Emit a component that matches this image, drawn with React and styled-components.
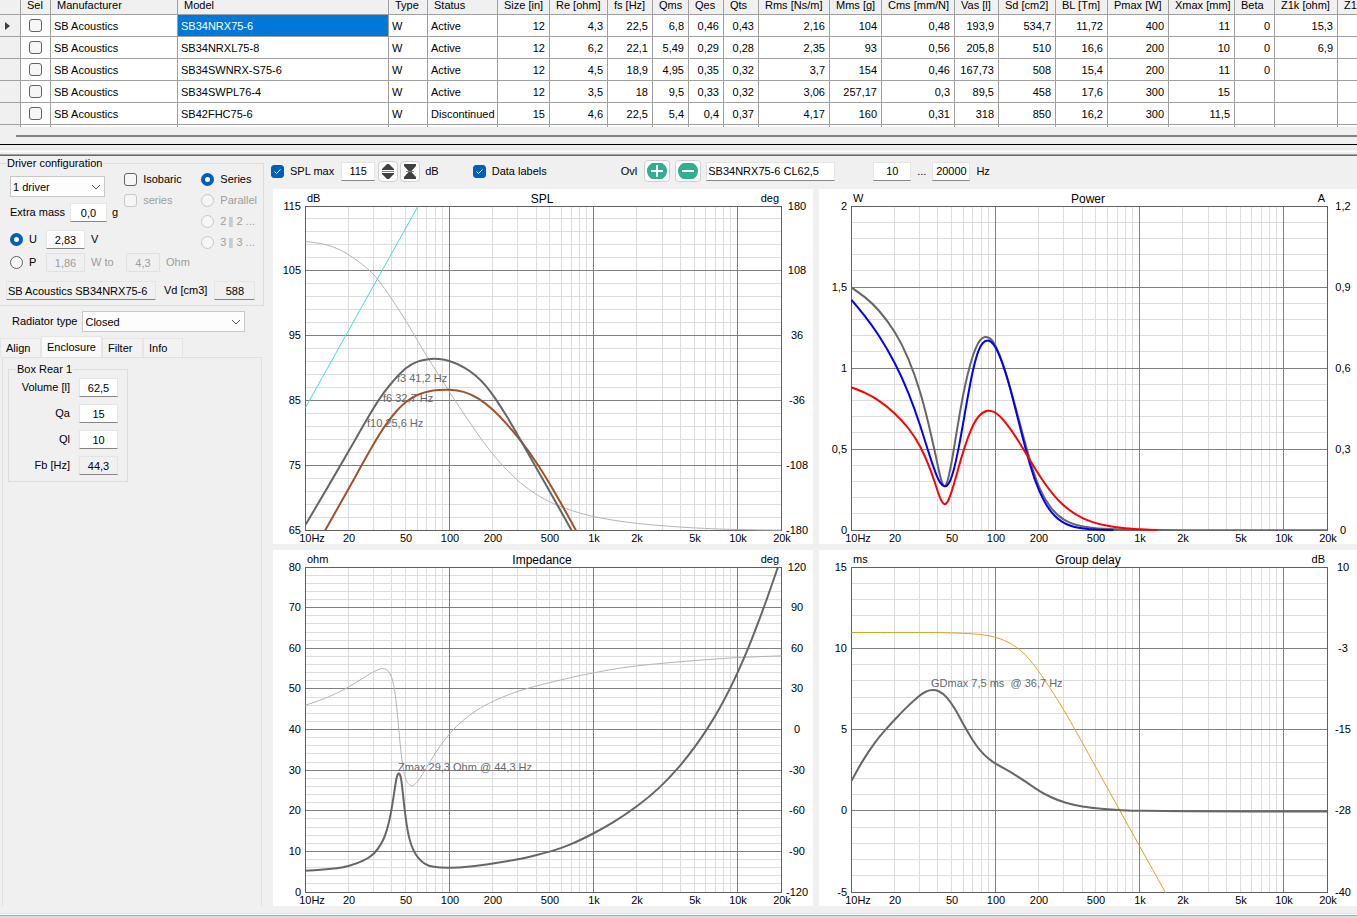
import React, { useEffect, useLayoutEffect, useRef, useState } from "react";
import styled, { createGlobalStyle, ThemeProvider } from "styled-components";

const theme = {
  colors: {
    face: "#f0f0f0",
    white: "#ffffff",
    text: "#000000",
    disabled: "#9d9d9d",
    line: "#a0a0a0",
    border: "#dcdcdc",
    fieldBottom: "#868686",
    accent: "#005fb8",
    selection: "#0078d7",
    gridMinor: "#dcdcdc",
    gridMajor: "#808080",
    frame: "#606060",
  },
};

const GlobalStyle = createGlobalStyle`
  * {
    box-sizing: border-box;
  }
  body {
    margin: 0;
    overflow: hidden;
    background-color: #f0f0f0;
    color: #000000;
    font-family: "Liberation Sans", Arial, sans-serif;
    font-size: 11px;
    line-height: 15px;
  }
  input, select, button {
    font-family: inherit;
    font-size: inherit;
    color: inherit;
    margin: 0;
  }
`;

const Window = styled.div`
  min-height: 100vh;
  display: flex;
  flex-direction: column;
`;

/* ---------- driver table ---------- */

const TableArea = styled.div`
  overflow: hidden;
  background-color: ${(props) => props.theme.colors.white};
`;

const DriverTable = styled.table`
  width: 1398px;
  table-layout: fixed;
  border-spacing: 0;
`;

const HeadCell = styled.th`
  height: 15px;
  padding: 0 0 3px 6px;
  font-weight: 400;
  line-height: 11px;
  text-align: left;
  white-space: nowrap;
  background-color: ${(props) => props.theme.colors.face};
  border-right: 1px solid ${(props) => props.theme.colors.line};
  border-bottom: 1px solid ${(props) => props.theme.colors.line};
`;

const Cell = styled.td`
  height: ${(props) => (props.$cut ? "2px" : "22px")};
  padding: 0 4px 0 3px;
  line-height: ${(props) => (props.$cut ? "2px" : "20px")};
  white-space: nowrap;
  text-align: ${(props) => props.$align || "right"};
  color: ${(props) => (props.$selected ? props.theme.colors.white : "inherit")};
  background-color: ${(props) =>
    props.$selected ? props.theme.colors.selection : props.theme.colors.white};
  border-right: 1px solid ${(props) => props.theme.colors.line};
  border-bottom: ${(props) => (props.$cut ? 0 : 1)}px solid
    ${(props) => props.theme.colors.line};
`;

const RowHeader = styled(Cell)`
  background-color: ${(props) => props.theme.colors.face};
  svg {
    display: block;
  }
`;

const ScrollTrack = styled.div`
  height: 17px;
  padding: 8px 0 0 16px;
`;

const ScrollThumb = styled.div`
  height: 2px;
  background-color: #858585;
`;

const Splitter = styled.div`
  height: 12px;
  border-top: 1px solid #000000;
  border-bottom: 1px solid #696969;
  display: flex;
  flex-direction: column;
  justify-content: space-between;
  &::before {
    content: "";
    height: 2px;
    margin-top: 3px;
    border-top: 1px solid #e3e3e3;
    border-bottom: 1px solid #ffffff;
  }
  &::after {
    content: "";
    height: 1px;
    background-color: #a0a0a0;
  }
`;

/* ---------- form parts ---------- */

const Label = styled.label`
  display: flex;
  align-items: center;
  gap: ${(props) => props.$gap || 6}px;
  white-space: nowrap;
  color: ${(props) =>
    props.$disabled ? props.theme.colors.disabled : "inherit"};
`;

const CheckInput = styled.input.attrs({ type: "checkbox" })`
  appearance: none;
  flex: none;
  display: block;
  width: 13px;
  height: 13px;
  border: 1px solid #626262;
  border-radius: 3px;
  background-color: #f6f6f6;
  &:disabled {
    border-color: #c8c8c8;
  }
  &:checked {
    border-color: ${(props) => props.theme.colors.accent};
    background: ${(props) => props.theme.colors.accent};
  }
`;

const CheckBox = styled.span`
  display: grid;
  place-items: center;
  width: 13px;
  height: 13px;
  > * {
    grid-area: 1 / 1;
  }
  svg {
    pointer-events: none;
  }
`;

const RadioInput = styled.input.attrs({ type: "radio" })`
  appearance: none;
  flex: none;
  width: 13px;
  height: 13px;
  border: 1px solid #626262;
  border-radius: 50%;
  background-color: #f6f6f6;
  &:disabled {
    border-color: #c8c8c8;
  }
  &:checked {
    border: 4px solid ${(props) => props.theme.colors.accent};
    background-color: #ffffff;
  }
`;

const Field = styled.input`
  width: ${(props) => props.$width}px;
  height: 19px;
  padding: 0 1px;
  text-align: ${(props) => props.$align || "center"};
  border: 1px solid #e4e4e4;
  border-bottom-color: ${(props) => props.theme.colors.fieldBottom};
  border-radius: 1px;
  background-color: ${(props) => props.theme.colors.white};
  &:read-only {
    background-color: #f0f0f0;
  }
  &:disabled {
    color: ${(props) => props.theme.colors.disabled};
    background-color: #f0f0f0;
    border-color: #e0e0e0;
  }
`;

const SelectBox = styled.span`
  display: grid;
  align-items: center;
  width: ${(props) => props.$width}px;
  > * {
    grid-area: 1 / 1;
  }
  select {
    appearance: none;
    width: 100%;
    height: 21px;
    padding: 0 20px 0 2px;
    border: 1px solid #c8c8c8;
    border-radius: 0;
    background-color: #fdfdfd;
  }
  svg {
    justify-self: end;
    margin-right: 4px;
    pointer-events: none;
  }
`;

const Fieldset = styled.fieldset`
  min-width: 0;
  margin: 0;
  padding: ${(props) => props.$padding || "1px 6px 5px 6px"};
  border: 1px solid ${(props) => props.theme.colors.border};
  border-left-width: ${(props) => (props.$open ? 0 : 1)}px;
`;

const Legend = styled.legend`
  padding: 0 1px;
  line-height: 15px;
`;

/* ---------- left side ---------- */

const Workspace = styled.div`
  flex: 1;
  display: flex;
`;

const Sidebar = styled.aside`
  flex: none;
  width: 264px;
  display: flex;
  flex-direction: column;
`;

const ConfigTop = styled.div`
  display: flex;
  justify-content: space-between;
`;

const Stack = styled.div`
  display: flex;
  flex-direction: column;
  gap: ${(props) => props.$gap || 0}px;
  padding: ${(props) => props.$padding || 0};
`;

const Row = styled.div`
  display: flex;
  align-items: ${(props) => props.$align || "center"};
  gap: ${(props) => props.$gap || 6}px;
  padding: ${(props) => props.$padding || 0};
  white-space: nowrap;
  color: ${(props) =>
    props.$disabled ? props.theme.colors.disabled : "inherit"};
`;

const SourceLabel = styled(Label)`
  width: 30px;
  color: ${(props) => props.theme.colors.text};
`;

const PowerUnit = styled.span`
  width: 29px;
`;

const ParallelMark = styled.span`
  display: inline-block;
  width: 4px;
  height: 10px;
  margin: 0 3px;
  vertical-align: middle;
  background-color: #b8cfea;
  border-right: 1px solid #dcd3c4;
`;

const TabList = styled.div`
  display: flex;
  align-items: flex-end;
  margin-top: 4px;
`;

const Tab = styled.button`
  height: ${(props) => (props.$active ? 21 : 19)}px;
  width: ${(props) => props.$width}px;
  padding: 0 0 0 5px;
  text-align: left;
  border: 1px solid #e5e5e5;
  border-bottom: 0;
  background-color: ${(props) => (props.$active ? "#f9f9f9" : "#f2f2f2")};
`;

const TabPanel = styled.div`
  flex: 1;
  margin: 0 2px 7px 2px;
  padding: 4px 5px;
  border: 1px solid #e0e0e0;
  border-bottom: 0;
  background-color: ${(props) => props.theme.colors.face};
`;

const BoxGroup = styled.div`
  width: 120px;
`;

const BoxRow = styled(Label)`
  justify-content: flex-end;
`;

/* ---------- toolbar and charts ---------- */

const Content = styled.main`
  flex: 1;
  min-width: 0;
  padding: 0 0 7px 7px;
  display: flex;
  flex-direction: column;
`;

const Toolbar = styled.div`
  height: 33px;
  padding-bottom: 3px;
  display: flex;
  align-items: center;
`;

const ToolGroup = styled.div`
  display: flex;
  align-items: center;
  gap: ${(props) => props.$gap || 6}px;
  margin-right: ${(props) => props.$after || 0}px;
`;

const IconButton = styled.button`
  width: ${(props) => props.$width || 20}px;
  height: ${(props) => (props.$width ? 22 : 21)}px;
  padding: 0;
  display: grid;
  place-items: center;
  border: 1px solid #d0d0d0;
  border-radius: 4px;
  background-color: #fdfdfd;
`;

const ChartGrid = styled.div`
  flex: 1;
  display: grid;
  grid-template-columns: 1fr 1fr;
  grid-template-rows: 355fr 356fr;
  gap: 6px;
  margin: 0 -2px 0 2px;
`;

const ChartCard = styled.section`
  min-width: 0;
  min-height: 240px;
  overflow: hidden;
  background-color: ${(props) => props.theme.colors.white};
  display: grid;
`;

const ChartSvg = styled.svg`
  display: block;
  width: 100%;
  height: 100%;
  min-height: 0;
  contain: size;
  text {
    font-size: 11px;
    fill: ${(props) => props.theme.colors.text};
  }
  text.title {
    font-size: 12px;
  }
  text.note {
    fill: #696969;
  }
`;

const StatusEdge = styled.footer`
  height: 5px;
  border-top: 1px solid #e3e3e3;
  background: linear-gradient(
    #ffffff 0 1px,
    #a0b0b8 1px 2px,
    #cfe0e6 2px
  );
`;

/* ---------- data ---------- */

const columns = [
  ["Sel", 30],
  ["Manufacturer", 127],
  ["Model", 211],
  ["Type", 39],
  ["Status", 70],
  ["Size [in]", 52],
  ["Re [ohm]", 58],
  ["fs [Hz]", 45],
  ["Qms", 36],
  ["Qes", 35],
  ["Qts", 35],
  ["Rms [Ns/m]", 71],
  ["Mms [g]", 52],
  ["Cms [mm/N]", 73],
  ["Vas [l]", 44],
  ["Sd [cm2]", 57],
  ["BL [Tm]", 52],
  ["Pmax [W]", 61],
  ["Xmax [mm]", 66],
  ["Beta", 40],
  ["Z1k [ohm]", 63],
  ["Z1", 60],
];

const drivers = [
  ["SB34NRX75-6", "Active", "12", "4,3", "22,5", "6,8", "0,46", "0,43", "2,16", "104", "0,48", "193,9", "534,7", "11,72", "400", "11", "0", "15,3", ""],
  ["SB34NRXL75-8", "Active", "12", "6,2", "22,1", "5,49", "0,29", "0,28", "2,35", "93", "0,56", "205,8", "510", "16,6", "200", "10", "0", "6,9", ""],
  ["SB34SWNRX-S75-6", "Active", "12", "4,5", "18,9", "4,95", "0,35", "0,32", "3,7", "154", "0,46", "167,73", "508", "15,4", "200", "11", "0", "", ""],
  ["SB34SWPL76-4", "Active", "12", "3,5", "18", "9,5", "0,33", "0,32", "3,06", "257,17", "0,3", "89,5", "458", "17,6", "300", "15", "", "", ""],
  ["SB42FHC75-6", "Discontinued", "15", "4,6", "22,5", "5,4", "0,4", "0,37", "4,17", "160", "0,31", "318", "850", "16,2", "300", "11,5", "", "", ""],
];

const frequencyLabels = [
  [10, "10Hz"],
  [20, "20"],
  [50, "50"],
  [100, "100"],
  [200, "200"],
  [500, "500"],
  [1000, "1k"],
  [2000, "2k"],
  [5000, "5k"],
  [10000, "10k"],
  [20000, "20k"],
];

// Curve points live in a 1428 x span space and are scaled to the plot area.
const charts = [
  {
    title: "SPL",
    leftUnit: "dB",
    rightUnit: "deg",
    span: 972,
    left: ["115", "105", "95", "85", "75", "65"],
    right: ["180", "108", "36", "-36", "-108", "-180"],
    curves: [
      { color: "#b4b4b4", width: 1, points: [[0, 105], [44, 111], [84, 122], [130, 145], [184, 185], [216, 218], [259, 278], [301, 343], [334, 399], [369, 457], [404, 512], [433, 558], [474, 620], [519, 686], [562, 743], [604, 790], [644, 828], [694, 865], [744, 891], [794, 910], [864, 930], [994, 951], [1164, 964], [1294, 969], [1427, 971]] },
      { color: "#40e0d0", width: 1, points: [[0, 603], [337, 0]] },
      { color: "#a0522d", width: 2, points: [[57, 975], [130, 846], [204, 713], [244, 651], [274, 613], [301, 587], [334, 566], [369, 555], [400, 551], [433, 550], [474, 556], [519, 576], [562, 610], [604, 653], [646, 704], [694, 770], [744, 851], [794, 940], [813, 975]] },
      { color: "#666666", width: 2, points: [[0, 955], [65, 845], [130, 733], [194, 622], [234, 560], [270, 516], [301, 485], [334, 466], [369, 458], [400, 458], [433, 464], [474, 482], [510, 507], [541, 538], [570, 577], [604, 630], [646, 702], [694, 787], [764, 910], [800, 975]] },
    ],
    notes: [
      [92, 176, "f3 41,2 Hz"],
      [78, 196, "f6 32,7 Hz"],
      [62, 221, "f10 25,6 Hz"],
    ],
  },
  {
    title: "Power",
    leftUnit: "W",
    rightUnit: "A",
    span: 972,
    left: ["2", "1,5", "1", "0,5", "0"],
    right: ["1,2", "0,9", "0,6", "0,3", "0"],
    curves: [
      { color: "#666666", width: 2, points: [[0, 243], [41, 273], [81, 311], [130, 377], [171, 458], [205, 554], [230, 648], [250, 735], [262, 792], [271, 826], [278, 838], [285, 832], [293, 803], [306, 735], [326, 613], [342, 532], [356, 475], [371, 429], [386, 401], [401, 392], [417, 397], [432, 418], [446, 451], [461, 495], [481, 561], [511, 673], [541, 780], [566, 848], [596, 900], [636, 939], [691, 959], [761, 967], [840, 970], [1000, 971], [1200, 971], [1428, 971]] },
      { color: "#0000ff", width: 2, points: [[0, 280], [41, 330], [81, 386], [130, 470], [171, 560], [205, 654], [231, 737], [252, 798], [266, 828], [279, 839], [291, 832], [305, 796], [322, 722], [341, 615], [360, 512], [377, 444], [393, 411], [409, 402], [426, 413], [444, 448], [461, 495], [480, 561], [509, 675], [537, 779], [561, 847], [591, 905], [631, 946], [681, 964], [731, 969], [786, 971]] },
      { color: "#ff0000", width: 2, points: [[0, 543], [41, 559], [81, 582], [130, 621], [171, 666], [205, 718], [232, 778], [250, 828], [266, 875], [279, 893], [291, 880], [305, 840], [321, 784], [339, 724], [361, 664], [384, 627], [409, 613], [434, 620], [465, 652], [501, 704], [541, 770], [581, 832], [631, 892], [693, 935], [761, 956], [821, 965], [881, 969], [918, 971]] },
    ],
    notes: [],
  },
  {
    title: "Impedance",
    leftUnit: "ohm",
    rightUnit: "deg",
    span: 975,
    left: ["80", "70", "60", "50", "40", "30", "20", "10", "0"],
    right: ["120", "90", "60", "30", "0", "-30", "-60", "-90", "-120"],
    curves: [
      { color: "#b4b4b4", width: 1, points: [[0, 413], [44, 398], [94, 377], [130, 358], [174, 331], [204, 313], [220, 306], [231, 303], [242, 306], [251, 315], [259, 332], [266, 360], [272, 405], [278, 465], [284, 530], [291, 590], [299, 629], [308, 648], [318, 654], [328, 650], [341, 635], [361, 604], [394, 550], [433, 498], [474, 458], [514, 428], [562, 402], [624, 376], [694, 355], [764, 338], [815, 326], [865, 316], [930, 304], [995, 295], [1075, 287], [1170, 279], [1298, 270], [1428, 265]] },
      { color: "#666666", width: 2, points: [[0, 910], [44, 907], [94, 902], [130, 895], [174, 879], [204, 859], [228, 827], [244, 788], [256, 737], [266, 675], [272, 637], [276, 623], [280, 618], [284, 623], [288, 642], [293, 685], [301, 754], [311, 811], [323, 846], [339, 872], [359, 889], [384, 898], [432, 901], [494, 897], [562, 888], [634, 876], [694, 862], [744, 849], [794, 831], [829, 815], [865, 797], [925, 763], [993, 717], [1060, 662], [1118, 601], [1165, 542], [1205, 484], [1240, 426], [1272, 366], [1299, 309], [1327, 245], [1355, 173], [1385, 92], [1418, -3]] },
    ],
    notes: [[93, 204, "Zmax 29,3 Ohm @ 44,3 Hz"]],
  },
  {
    title: "Group delay",
    leftUnit: "ms",
    rightUnit: "dB",
    span: 975,
    left: ["15", "10", "5", "0", "-5"],
    right: ["10", "-3", "-15", "-28", "-40"],
    curves: [
      { color: "#daa520", width: 1, points: [[0, 195], [141, 195], [230, 195], [300, 196], [360, 199], [400, 203], [431, 209], [463, 221], [496, 240], [528, 269], [561, 311], [597, 364], [636, 426], [680, 503], [732, 597], [805, 729], [865, 837], [944, 979]] },
      { color: "#666666", width: 2, points: [[0, 640], [33, 581], [69, 527], [101, 488], [132, 454], [166, 419], [200, 388], [224, 372], [244, 368], [263, 372], [284, 388], [309, 422], [336, 471], [361, 514], [386, 549], [411, 573], [438, 592], [481, 616], [526, 645], [563, 670], [601, 690], [643, 706], [693, 717], [751, 724], [811, 728], [881, 730], [1000, 731], [1200, 732], [1428, 732]] },
    ],
    notes: [[80, 120, "GDmax 7,5 ms\u00a0 @ 36,7 Hz"]],
  },
];

/* ---------- chart ---------- */

// Cubic B-spline whose control points are pushed out so it meets the samples.
function smoothPath(points) {
  if (points.length < 3) {
    return `M${points.map((p) => p.join(" ")).join("L")}`;
  }
  const last = points.length - 1;
  const control = points.map((p, i) => {
    if (i === 0 || i === last) return p;
    return [0, 1].map(
      (k) => p[k] + (2 * p[k] - points[i - 1][k] - points[i + 1][k]) / 6
    );
  });
  const mirror = (p, q) => [2 * p[0] - q[0], 2 * p[1] - q[1]];
  const c = [
    mirror(control[0], control[1]),
    ...control,
    mirror(control[last], control[last - 1]),
  ];
  const mix = (a, b, t) => [a[0] + (b[0] - a[0]) * t, a[1] + (b[1] - a[1]) * t];
  let d = `M${points[0].join(" ")}`;
  for (let i = 1; i < c.length - 2; i++) {
    const b1 = mix(c[i], c[i + 1], 1 / 3);
    const b2 = mix(c[i], c[i + 1], 2 / 3);
    const end = mix(b2, mix(c[i + 1], c[i + 2], 1 / 3), 1 / 2);
    d += `C${[...b1, ...b2, ...end].map((n) => n.toFixed(2)).join(" ")}`;
  }
  return d;
}

const DECADES = Math.log10(2000);

function Chart({ id, data }) {
  const cardRef = useRef(null);
  const [size, setSize] = useState({ width: 540, height: 355 });

  const measure = () => {
    const box = cardRef.current.getBoundingClientRect();
    setSize({ width: Math.round(box.width), height: Math.round(box.height) });
  };

  useLayoutEffect(measure, []);

  useEffect(() => {
    const observer = new ResizeObserver(measure);
    observer.observe(cardRef.current);
    return () => observer.disconnect();
  }, []);

  const x0 = 32;
  const y0 = 17;
  const w = size.width - 64;
  const h = size.height - 31;
  const fx = (hz) => x0 + Math.floor((Math.log10(hz / 10) / DECADES) * w);
  const rows = data.left.length - 1;
  const fy = (i) => y0 + Math.floor((i / rows) * h);

  const lines = [];
  [10, 100, 1000, 10000].forEach((decade) => {
    for (let k = 1; k < 10; k++) {
      if (decade * k <= 20000) {
        lines.push({
          d: `M${fx(decade * k) + 0.5} ${y0}v${h}`,
          major: k === 1,
        });
      }
    }
  });
  for (let i = 0; i <= rows * 5; i++) {
    lines.push({ d: `M${x0} ${fy(i / 5) + 0.5}h${w}`, major: i % 5 === 0 });
  }
  lines.sort((a, b) => a.major - b.major);

  return (
    <ChartCard ref={cardRef}>
      <ChartSvg role="img" aria-label={data.title}>
        <clipPath id={id}>
          <rect x={x0} y={y0} width={w + 1} height={h + 1} />
        </clipPath>
        <g shapeRendering="crispEdges">
          {lines.map((line) => (
            <path
              key={line.d}
              d={line.d}
              stroke={
                line.major ? theme.colors.gridMajor : theme.colors.gridMinor
              }
            />
          ))}
          <rect
            x={x0 + 0.5}
            y={y0 + 0.5}
            width={w}
            height={h}
            fill="none"
            stroke={theme.colors.frame}
          />
        </g>
        <g clipPath={`url(#${id})`} fill="none">
          {data.curves.map((curve, i) => (
            <path
              key={i}
              d={smoothPath(
                curve.points.map(([x, y]) => [
                  x0 + 0.5 + (x * w) / 1428,
                  y0 + 0.5 + (y * h) / data.span,
                ])
              )}
              stroke={curve.color}
              strokeWidth={curve.width}
            />
          ))}
        </g>
        {data.notes.map(([x, y, text]) => (
          <text
            className="note"
            key={text}
            x={x0 + Math.round((x * w) / 476)}
            y={y0 + Math.round((y * h * 3) / data.span)}
          >
            {text}
          </text>
        ))}
        <text
          className="title"
          x={x0 + w / 2 - 1}
          y={y0 - 3}
          textAnchor="middle"
        >
          {data.title}
        </text>
        <text x={x0 + 2} y={y0 - 4}>
          {data.leftUnit}
        </text>
        <text x={x0 + w - 2} y={y0 - 4} textAnchor="end">
          {data.rightUnit}
        </text>
        {data.left.map((text, i) => (
          <text key={text} x={x0 - 4} y={fy(i) + 4} textAnchor="end">
            {text}
          </text>
        ))}
        {data.right.map((text, i) => (
          <text key={text} x={x0 + w + 16} y={fy(i) + 4} textAnchor="middle">
            {text}
          </text>
        ))}
        {frequencyLabels.map(([hz, text]) => (
          <text
            key={text}
            x={fx(hz) + (hz === 10 ? 7 : 1)}
            y={y0 + h + 12}
            textAnchor="middle"
          >
            {text}
          </text>
        ))}
      </ChartSvg>
    </ChartCard>
  );
}

/* ---------- page parts ---------- */

function Check(props) {
  return (
    <CheckBox>
      <CheckInput {...props} />
      {props.defaultChecked && (
        <svg width="13" height="13" viewBox="0 0 13 13" fill="none">
          <path d="M3.5 6.5l2 2 4-4" stroke="#ffffff" />
        </svg>
      )}
    </CheckBox>
  );
}

function Dropdown({ width, value, ...rest }) {
  return (
    <SelectBox $width={width}>
      <select {...rest}>
        <option>{value}</option>
      </select>
      <svg width="10" height="6" viewBox="0 0 10 6" fill="none">
        <path d="M1 1l4 4 4-4" stroke="#505050" />
      </svg>
    </SelectBox>
  );
}

function Drivers() {
  return (
    <TableArea>
      <DriverTable>
        <colgroup>
          <col style={{ width: 21 }} />
          {columns.map(([name, width]) => (
            <col key={name} style={{ width }} />
          ))}
        </colgroup>
        <thead>
          <tr>
            <HeadCell />
            {columns.map(([name]) => (
              <HeadCell key={name}>{name}</HeadCell>
            ))}
          </tr>
        </thead>
        <tbody>
          {drivers.map(([model, status, ...values], i) => (
            <tr key={model}>
              <RowHeader>
                {i === 0 && (
                  <svg width="10" height="10" viewBox="0 0 10 10">
                    <path d="M2 1l5 4-5 4z" fill="#404040" />
                  </svg>
                )}
              </RowHeader>
              <Cell $align="left">
                <Row $padding="0 0 0 5px">
                  <Check aria-label={`Select ${model}`} />
                </Row>
              </Cell>
              <Cell $align="left">SB Acoustics</Cell>
              <Cell $align="left" $selected={i === 0}>
                {model}
              </Cell>
              <Cell $align="left">W</Cell>
              <Cell $align="left">{status}</Cell>
              {values.map((value, k) => (
                <Cell key={k}>{value}</Cell>
              ))}
            </tr>
          ))}
          <tr aria-hidden="true">
            <RowHeader $cut />
            {columns.map(([name]) => (
              <Cell key={name} $cut />
            ))}
          </tr>
        </tbody>
      </DriverTable>
    </TableArea>
  );
}

function DriverConfiguration() {
  return (
    <Fieldset $open>
      <Legend>Driver configuration</Legend>
      <ConfigTop>
        <Stack>
          <Row $align="flex-start">
            <Stack $gap={6} $padding="4px 0 0 4px">
              <Dropdown width={95} value="1 driver" aria-label="Drivers" />
              <Label $gap={5}>
                Extra mass
                <Field $width={37} defaultValue="0,0" />g
              </Label>
            </Stack>
            <Stack $gap={6}>
              <Label>
                <Check />
                Isobaric
              </Label>
              <Label $disabled>
                <Check disabled />
                series
              </Label>
            </Stack>
          </Row>
          <Stack $gap={4} $padding="8px 0 9px 4px">
            <Row>
              <SourceLabel>
                <RadioInput name="source" defaultChecked />U
              </SourceLabel>
              <Field $width={39} defaultValue="2,83" aria-label="Voltage" />
              V
            </Row>
            <Row $disabled>
              <SourceLabel>
                <RadioInput name="source" />P
              </SourceLabel>
              <Field $width={39} disabled defaultValue="1,86" aria-label="Power" />
              <PowerUnit>W to</PowerUnit>
              <Field $width={34} disabled defaultValue="4,3" aria-label="Load" />
              Ohm
            </Row>
          </Stack>
        </Stack>
        <Stack $gap={6}>
          <Label>
            <RadioInput name="wiring" defaultChecked />
            Series
          </Label>
          <Label $disabled>
            <RadioInput name="wiring" disabled />
            Parallel
          </Label>
          <Label $disabled>
            <RadioInput name="wiring" disabled />
            <span>
              2<ParallelMark />2 ...
            </span>
          </Label>
          <Label $disabled>
            <RadioInput name="wiring" disabled />
            <span>
              3<ParallelMark />3 ...
            </span>
          </Label>
        </Stack>
      </ConfigTop>
      <Row $gap={8}>
        <Field
          $width={150}
          $align="left"
          readOnly
          value="SB Acoustics SB34NRX75-6"
          aria-label="Driver"
        />
        <Label $gap={7}>
          Vd [cm3]
          <Field $width={41} readOnly value="588" />
        </Label>
      </Row>
    </Fieldset>
  );
}

const boxFields = [
  ["Volume [l]", "62,5"],
  ["Qa", "15"],
  ["Ql", "10"],
  ["Fb [Hz]", "44,3", true],
];

function EnclosurePanel() {
  return (
    <TabPanel role="tabpanel">
      <BoxGroup>
        <Fieldset $padding="1px 9px 6px 7px">
          <Legend>Box Rear 1</Legend>
          <Stack $gap={7}>
            {boxFields.map(([name, value, locked]) => (
              <BoxRow key={name} $gap={9}>
                {name}
                <Field $width={39} defaultValue={value} readOnly={locked} />
              </BoxRow>
            ))}
          </Stack>
        </Fieldset>
      </BoxGroup>
    </TabPanel>
  );
}

function ChartToolbar() {
  return (
    <Toolbar>
      <ToolGroup $gap={4} $after={34}>
        <Label>
          <Check defaultChecked />
          SPL max
        </Label>
        <ToolGroup $gap={2}>
          <Row $padding="0 1px 0 3px">
            <Field $width={34} defaultValue="115" aria-label="SPL max value" />
          </Row>
          <IconButton aria-label="Expand range">
            <svg width="14" height="15" viewBox="0 0 14 15" fill="#404040">
              <path d="M6 0h2l5 5v1H1V5z" />
              <path d="M1 7h12v1H1z" fill="#808080" />
              <path d="M1 9h12v1l-5 5H6l-5-5z" />
            </svg>
          </IconButton>
          <IconButton aria-label="Fit range">
            <svg width="14" height="15" viewBox="0 0 14 15" fill="#404040">
              <path d="M1 0h12v2L8.500 7h-3L1 2z" />
              <path d="M3 7h8v1H3z" fill="#808080" />
              <path d="M5.500 8h3l4.500 5v2H1v-2z" />
            </svg>
          </IconButton>
          <Row $padding="0 0 0 3px">dB</Row>
        </ToolGroup>
      </ToolGroup>
      <ToolGroup $after={74}>
        <Label>
          <Check defaultChecked />
          Data labels
        </Label>
      </ToolGroup>
      <ToolGroup $gap={5} $after={38}>
        <Row $padding="0 2px 0 0">Ovl</Row>
        <IconButton $width={26} aria-label="Add overlay">
          <svg width="20" height="16" viewBox="0 0 20 16">
            <path d="M5 0h10q5 3 5 8t-5 8H5q-5-3-5-8t5-8z" fill="#2fae90" />
            <path d="M4 8h12M10 2v12" stroke="#ffffff" strokeWidth="2" />
          </svg>
        </IconButton>
        <IconButton $width={26} aria-label="Remove overlay">
          <svg width="20" height="16" viewBox="0 0 20 16">
            <path d="M5 0h10q5 3 5 8t-5 8H5q-5-3-5-8t5-8z" fill="#2fae90" />
            <path d="M4 8h12" stroke="#ffffff" strokeWidth="2" />
          </svg>
        </IconButton>
        <Field
          $width={129}
          $align="left"
          defaultValue="SB34NRX75-6 CL62,5"
          aria-label="Overlay name"
        />
      </ToolGroup>
      <ToolGroup $gap={6}>
        <Field $width={38} defaultValue="10" aria-label="From" />
        ...
        <Field $width={38} defaultValue="20000" aria-label="To" />
        Hz
      </ToolGroup>
    </Toolbar>
  );
}

export default function App() {
  return (
    <ThemeProvider theme={theme}>
      <GlobalStyle />
      <Window>
        <Drivers />
        <ScrollTrack>
          <ScrollThumb />
        </ScrollTrack>
        <Splitter />
        <Workspace>
          <Sidebar>
            <DriverConfiguration />
            <Row $padding="5px 0 0 12px">
              <Label $gap={5}>
                Radiator type
                <Dropdown width={163} value="Closed" />
              </Label>
            </Row>
            <TabList role="tablist">
              <Tab role="tab" $width={41}>
                Align
              </Tab>
              <Tab role="tab" $width={61} $active aria-selected="true">
                Enclosure
              </Tab>
              <Tab role="tab" $width={41}>
                Filter
              </Tab>
              <Tab role="tab" $width={40}>
                Info
              </Tab>
            </TabList>
            <EnclosurePanel />
          </Sidebar>
          <Content>
            <ChartToolbar />
            <ChartGrid>
              {charts.map((data, i) => (
                <Chart key={data.title} id={`plot-${i}`} data={data} />
              ))}
            </ChartGrid>
          </Content>
        </Workspace>
        <StatusEdge />
      </Window>
    </ThemeProvider>
  );
}
